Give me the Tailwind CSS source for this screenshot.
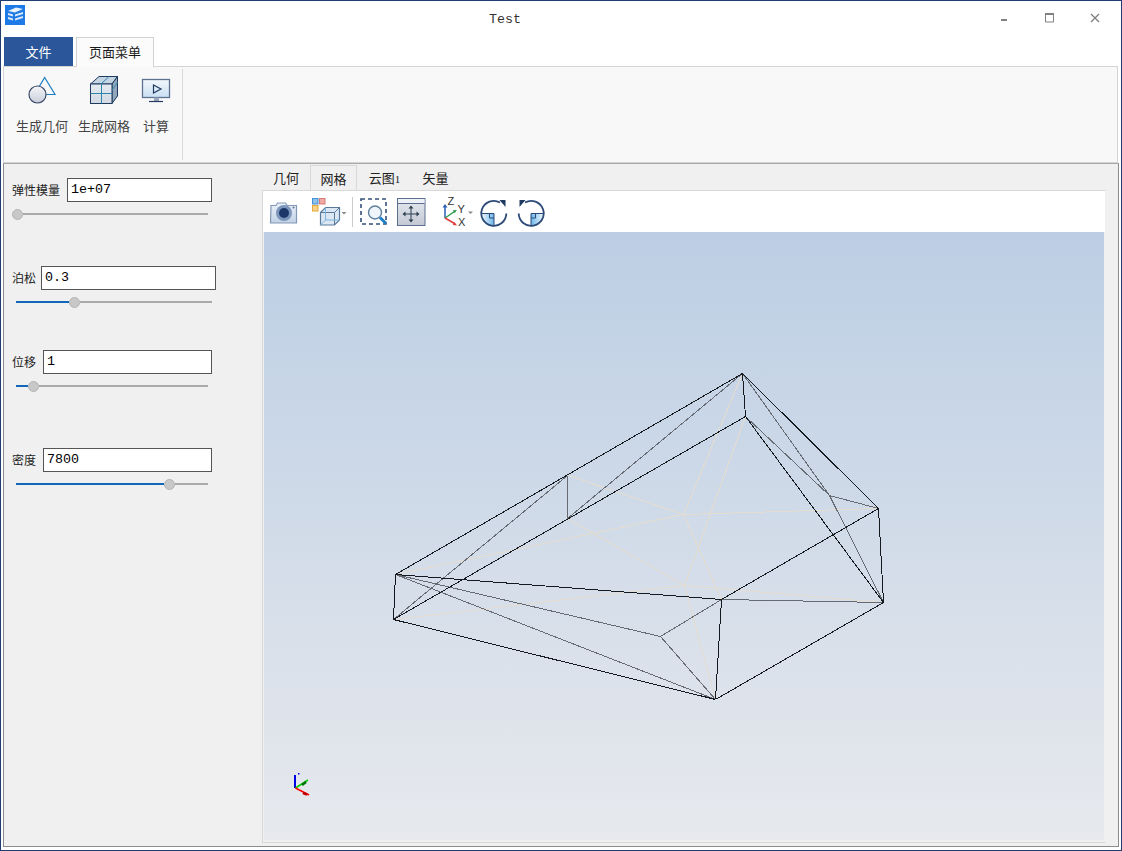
<!DOCTYPE html>
<html>
<head>
<meta charset="utf-8">
<script src="https://cdn.jsdelivr.net/npm/@tailwindcss/browser@4"></script>
</head>
<body class="m-0">
<div class="w-[1122px] h-[851px] border border-[#1f3d73] bg-white flex flex-col overflow-hidden font-['Noto_Sans_CJK_SC','Liberation_Sans',sans-serif] text-[#1a1a1a]">

  <!-- title bar -->
  <div class="h-[36px] flex shrink-0">
    <svg class="ml-[4px] mt-[4px] w-[20px] h-[20px]" viewBox="5 5 20 20">
      <rect x="5" y="5" width="20" height="20" fill="#1e7ae6"/>
      <path d="M8 11l8-3.500 7 1.500-8 3.500z" fill="#fff" opacity=".9"/>
      <path d="M8 13l5 1.500v2l-5-1.500zM8 17l5 1.500v2l-5-1.500zM15 14.500l8-2.500v2l-8 2.500zM15 18.500l8-2.500v2l-8 2.500z" fill="#fff" opacity=".85"/>
    </svg>
    <div class="ml-[464px] mt-[11px] h-[16px] leading-[16px] text-[13.33px] text-[#333] font-['Liberation_Mono',monospace]">Test</div>
    <div class="ml-auto flex">
      <svg class="w-[20px] h-[20px] mt-[8px]" viewBox="993 9 20 20"><rect x="1000" y="19" width="6" height="2" fill="#808080"/></svg>
      <svg class="ml-[26px] w-[20px] h-[20px] mt-[8px]" viewBox="1040 9 20 20"><path d="M1045.500 14.500h8v7.500h-8z" fill="none" stroke="#808080"/><rect x="1045" y="13" width="9" height="2" fill="#808080"/></svg>
      <svg class="ml-[25px] mr-[16px] w-[20px] h-[20px] mt-[8px]" viewBox="1085 9 20 20"><path d="M1091 14l8 8M1099 14l-8 8" stroke="#808080" stroke-width="1.300" fill="none"/></svg>
    </div>
  </div>

  <!-- ribbon tabs -->
  <div class="h-[29px] flex pl-[3px] shrink-0 relative z-10">
    <div class="w-[69px] h-[29px] bg-[#2b579a] text-white text-[13px] leading-[29px] text-center">文件</div>
    <div class="ml-[3px] w-[78px] h-[30px] border border-b-0 border-[#d2d2d2] bg-[#fbfbfb] text-[13px] leading-[28px] text-center">页面菜单</div>
  </div>

  <!-- ribbon -->
  <div class="ml-[2px] w-[1115px] h-[97px] shrink-0 border border-[#d4d4d4] bg-[#f8f8f8] flex text-[13px] text-[#444]">
    <div class="w-[179px] my-[2px] border-r border-[#d8d8d8] flex">
      <div class="w-[62px] ml-[7px] flex flex-col items-center">
        <svg class="mt-[5px] w-[32px] h-[32px]" viewBox="26 74 32 32">
          <defs><linearGradient id="g1" x1="0" y1="0" x2="0" y2="1"><stop offset="0" stop-color="#f4f5f8"/><stop offset="1" stop-color="#c9cfdb"/></linearGradient></defs>
          <path d="M44.700 77.500L55 94.500H34.500z" fill="#f8f8f8" stroke="#1f7fc4" stroke-width="1.200"/>
          <circle cx="37.500" cy="94.500" r="8.500" fill="url(#g1)" stroke="#3b4a6b" stroke-width="1.200"/>
        </svg>
        <div class="mt-[11px] leading-[18px] whitespace-nowrap">生成几何</div>
      </div>
      <div class="w-[62px] flex flex-col items-center">
        <svg class="mt-[5px] w-[32px] h-[32px]" viewBox="88 74 32 32">
          <defs><linearGradient id="g2" x1="0" y1="0" x2="0" y2="1"><stop offset="0" stop-color="#e6ebf1"/><stop offset="1" stop-color="#d2d9e2"/></linearGradient></defs>
          <path d="M90.500 84l8.500-7.500h18.500l-5.500 7.500z" fill="#c5d4e2" stroke="#1f3a5f"/>
          <path d="M112 84l5.500-7.500v19.500l-5.500 7.500z" fill="#8fa6bd" stroke="#1f3a5f"/>
          <rect x="90.500" y="84" width="21.500" height="19.500" fill="url(#g2)" stroke="#1f3a5f"/>
          <path d="M101.500 84v19.500M90.500 93.500h21.500M101 84l8-7.500M112 90l5.500-7.500" stroke="#2f86ab" fill="none"/>
        </svg>
        <div class="mt-[11px] leading-[18px] whitespace-nowrap">生成网格</div>
      </div>
      <div class="w-[42px] flex flex-col items-center">
        <svg class="mt-[5px] w-[32px] h-[32px]" viewBox="140 74 32 32">
          <defs><linearGradient id="g3" x1="0" y1="0" x2="0" y2="1"><stop offset="0" stop-color="#f2f7fc"/><stop offset="1" stop-color="#c9dff3"/></linearGradient></defs>
          <rect x="142.500" y="79.500" width="27" height="18" fill="url(#g3)" stroke="#5f7193" stroke-width="1.300"/>
          <path d="M153.500 85l7.500 4-7.500 4z" fill="none" stroke="#1f3a5f" stroke-width="1.200"/>
          <path d="M154 97.500h5v4h-5z" fill="#9aa7bd"/>
          <path d="M149 101.500h14" stroke="#1f3a5f" stroke-width="1.200"/>
        </svg>
        <div class="mt-[11px] leading-[18px] whitespace-nowrap">计算</div>
      </div>
    </div>
  </div>

  <!-- main panel -->
  <div class="ml-[2px] w-[1116px] flex-1 mb-[3px] bg-[#f0f0f0] border border-[#8c8c8c] border-t-[#a8a8a8] flex">
    <!-- sidebar -->
    <div class="w-[258px] shrink-0 pt-[14px] text-[12px] text-[#222]">
      <div class="h-[42px]">
        <div class="flex items-center pl-[8px] h-[24px]">
          <span class="w-[48px] whitespace-nowrap">弹性模量</span>
          <div class="ml-[7px] w-[145px] h-[24px] border border-[#555] bg-white pl-[3px] leading-[22px] text-[13.33px] text-black font-['Liberation_Mono',monospace]">1e+07</div>
        </div>
        <div class="mt-[6px] ml-[8px] w-[196px] h-[12px] flex items-center">
          <div class="w-[11px] h-[11px] rounded-full bg-[#c8c8c8] border border-[#b4b4b4] shrink-0"></div>
          <div class="flex-1 h-[2px] bg-[#aaaaaa]"></div>
        </div>
      </div>
      <div class="h-[42px] mt-[46px]">
        <div class="flex items-center pl-[8px] h-[24px]">
          <span class="w-[23px] whitespace-nowrap">泊松</span>
          <div class="ml-[6px] w-[175px] h-[24px] border border-[#555] bg-white pl-[3px] leading-[22px] text-[13.33px] text-black font-['Liberation_Mono',monospace]">0.3</div>
        </div>
        <div class="mt-[6px] ml-[12px] w-[196px] h-[12px] flex items-center">
          <div class="w-[53px] h-[2px] bg-[#1167b8]"></div>
          <div class="w-[11px] h-[11px] rounded-full bg-[#c8c8c8] border border-[#b4b4b4] shrink-0"></div>
          <div class="flex-1 h-[2px] bg-[#aaaaaa]"></div>
        </div>
      </div>
      <div class="h-[42px] mt-[42px]">
        <div class="flex items-center pl-[8px] h-[24px]">
          <span class="w-[25px] whitespace-nowrap">位移</span>
          <div class="ml-[6px] w-[169px] h-[24px] border border-[#555] bg-white pl-[3px] leading-[22px] text-[13.33px] text-black font-['Liberation_Mono',monospace]">1</div>
        </div>
        <div class="mt-[6px] ml-[12px] w-[192px] h-[12px] flex items-center">
          <div class="w-[12px] h-[2px] bg-[#1167b8]"></div>
          <div class="w-[11px] h-[11px] rounded-full bg-[#c8c8c8] border border-[#b4b4b4] shrink-0"></div>
          <div class="flex-1 h-[2px] bg-[#aaaaaa]"></div>
        </div>
      </div>
      <div class="h-[42px] mt-[56px]">
        <div class="flex items-center pl-[8px] h-[24px]">
          <span class="w-[25px] whitespace-nowrap">密度</span>
          <div class="ml-[6px] w-[169px] h-[24px] border border-[#555] bg-white pl-[3px] leading-[22px] text-[13.33px] text-black font-['Liberation_Mono',monospace]">7800</div>
        </div>
        <div class="mt-[6px] ml-[12px] w-[192px] h-[12px] flex items-center">
          <div class="w-[148px] h-[2px] bg-[#1167b8]"></div>
          <div class="w-[11px] h-[11px] rounded-full bg-[#c8c8c8] border border-[#b4b4b4] shrink-0"></div>
          <div class="flex-1 h-[2px] bg-[#aaaaaa]"></div>
        </div>
      </div>
    </div>

    <!-- right column -->
    <div class="w-[844px] shrink-0 flex flex-col pt-[1px] mb-[3px]">
      <div class="h-[25px] flex text-[13px] text-[#222] shrink-0 relative z-10">
        <div class="w-[48px] text-center leading-[26px]">几何</div>
        <div class="w-[47px] h-[25px] border border-b-0 border-[#d8d8d8] bg-[#f0f0f0] text-center leading-[26px]">网格</div>
        <div class="w-[54px] text-center leading-[26px] whitespace-nowrap">云图<span class="text-[11px] tracking-[-1px] font-['Liberation_Serif',serif]">1</span></div>
        <div class="w-[49px] text-center leading-[26px]">矢量</div>
      </div>
      <div class="flex-1 border border-[#d8d8d8] border-r-transparent flex flex-col">
        <!-- toolbar -->
        <div class="h-[41px] bg-white shrink-0 flex">
          <svg class="w-[842px] h-[41px]" viewBox="263 191 842 41">
            <defs>
              <linearGradient id="c1" x1="0" y1="0" x2="0" y2="1"><stop offset="0" stop-color="#eaf1f8"/><stop offset="1" stop-color="#c2d3e6"/></linearGradient>
              <linearGradient id="c2" x1="0" y1="0" x2="0" y2="1"><stop offset="0" stop-color="#e6e9ef"/><stop offset="1" stop-color="#c3c9d5"/></linearGradient>
              <linearGradient id="c3" x1="0" y1="0" x2="1" y2="0"><stop offset="0" stop-color="#f2f8fd"/><stop offset="1" stop-color="#6bb6ea"/></linearGradient>
              <linearGradient id="c4" x1="1" y1="0" x2="0" y2="0"><stop offset="0" stop-color="#f2f8fd"/><stop offset="1" stop-color="#6bb6ea"/></linearGradient>
            </defs>
            <!-- camera -->
            <path d="M271 205.500h5l1.500-2.500h8l1.500 2.500h9.500v17.500h-26z" fill="url(#c1)" stroke="#8497b6" stroke-width="1.200"/>
            <circle cx="284" cy="213" r="8" fill="#7c95ba"/>
            <circle cx="284" cy="213" r="5" fill="#1d3768"/>
            <circle cx="293.500" cy="207.500" r="1" fill="#5f7193"/>
            <!-- palette + cube -->
            <rect x="312.500" y="198.500" width="5.500" height="5.500" fill="#8ec0ea" stroke="#3f8fd6"/>
            <rect x="319.500" y="198.500" width="5.500" height="5.500" fill="#efa9a4" stroke="#d87a75"/>
            <rect x="312.500" y="205.500" width="5.500" height="5.500" fill="#f7d28a" stroke="#e9a63a"/>
            <path d="M320.500 212.500l5-5h14v12.500l-5 5h-14z" fill="#dbe7f3" stroke="#5a7a9b" stroke-width="1.200"/>
            <path d="M320.500 212.500h14v12.500M334.500 212.500l5-5" fill="none" stroke="#5a7a9b"/>
            <path d="M320.500 225l5-5h14M325.500 207.500V220" fill="none" stroke="#7fb4de"/>
            <path d="M341.500 212h5l-2.500 2.500z" fill="#888"/>
            <path d="M352.500 197v30" stroke="#cccccc"/>
            <!-- zoom box -->
            <rect x="361" y="199" width="25" height="25" fill="none" stroke="#34507a" stroke-width="1.600" stroke-dasharray="4 3"/>
            <circle cx="375" cy="212.500" r="6.500" fill="#eef5fb" stroke="#5f7f9f" stroke-width="1.400"/>
            <path d="M380 217.500l6 6" stroke="#1f7fc4" stroke-width="3"/>
            <!-- fit -->
            <rect x="397.500" y="198.500" width="27.500" height="27" fill="url(#c2)" stroke="#5b6f8e"/>
            <rect x="398" y="199" width="26.500" height="4" fill="#eef1f5"/>
            <path d="M398 203.500h26.500" stroke="#5b6f8e"/>
            <path d="M411 207.500v13M404.500 214h13" stroke="#2c3e50" stroke-width="1"/>
            <path d="M411 205.500l-2.500 3h5zM411 222.500l-2.500-3h5zM402.500 214l3-2.500v5zM419.500 214l-3-2.500v5z" fill="#2c3e50"/>
            <!-- axes -->
            <path d="M445 218V206" stroke="#2a5fb5" stroke-width="1.500"/>
            <path d="M445 204l-2.500 3.500h5z" fill="#2a5fb5"/>
            <path d="M445 218l9.500-6.500" stroke="#28a04a" stroke-width="1.500"/>
            <path d="M457 210l-4.200.2 1.800 3z" fill="#28a04a"/>
            <path d="M445 218l9.500 5.500" stroke="#e23b3b" stroke-width="1.500"/>
            <path d="M457 225.500l-4.200-.5 1.800-3z" fill="#e23b3b"/>
            <text x="447.500" y="205" font-family="Liberation Sans" font-size="11" fill="#333">Z</text>
            <text x="457.500" y="213" font-family="Liberation Sans" font-size="11" fill="#333">Y</text>
            <text x="458" y="225.500" font-family="Liberation Sans" font-size="11" fill="#333">X</text>
            <path d="M468 211.500h5l-2.500 2.500z" fill="#888"/>
            <!-- rotate right -->
            <path d="M481.500 213.500h12.500v12.500a12.500 12.500 0 0 1-12.500-12.500z" fill="url(#c3)"/>
            <path d="M481.500 213.500h12.500v12.500M489.500 213.500v4.500h4.500" fill="none" stroke="#2c4a78"/>
            <path d="M500 202.500a12.500 12.500 0 1 0 6.300 11" fill="none" stroke="#2c4a78" stroke-width="1.800"/>
            <path d="M499.500 200h6v7z" fill="#1f3a5f"/>
            <!-- rotate left -->
            <path d="M543.500 213.500h-12.500v12.500a12.500 12.500 0 0 0 12.500-12.500z" fill="url(#c4)"/>
            <path d="M543.500 213.500h-12.500v12.500M535.500 213.500v4.500h-4.500" fill="none" stroke="#2c4a78"/>
            <path d="M525 202.500a12.500 12.500 0 1 1-6.300 11" fill="none" stroke="#2c4a78" stroke-width="1.800"/>
            <path d="M525.500 200h-6v7z" fill="#1f3a5f"/>
          </svg>
        </div>
        <!-- viewport -->
        <div class="ml-[1px] w-[840px] h-[608px] shrink-0 bg-linear-to-b from-[#bccee4] to-[#e7e9ed]">
          <svg class="block w-[840px] h-[608px]" viewBox="264 232 840 608" fill="none" shape-rendering="crispEdges">
            <g transform="translate(0.5 0.5)">
              <g stroke="#e3dccf" stroke-width="1">
                <path d="M742 373L683 514M745 416L684 585M568 475L683 514M683 514L721 599M395 574L683 514M683 514L878 508M393 619L684 585M684 585L883 602M567 518L684 585M684 585L715 699"/>
              </g>
              <g stroke="#666b73" stroke-width="1">
                <path d="M742 373L567 518M567 475L393 619M567 475V518M742 373L829 495M829 495L883 602M745 416L829 495M829 495L878 508M721 599L883 602M395 574L660 636M395 574L715 699M660 636L721 599M660 636L715 699"/>
              </g>
              <g stroke="#14181f" stroke-width="1">
                <path d="M742 373L395 574M742 373L745 416M745 416L393 619M742 373L878 508M745 416L883 602M878 508L883 602M878 508L721 599M395 574L721 599M395 574L393 619M393 619L715 699M721 599L715 699M715 699L883 602"/>
              </g>
            </g>
            <g shape-rendering="auto">
              <path d="M295 788V775" stroke="#0000e0" stroke-width="2"/>
              <rect x="298" y="773" width="1.500" height="1.500" fill="#0000e0"/>
              <path d="M295.500 788L308 780" stroke="#00d000" stroke-width="1.500"/>
              <path d="M302 785l4-3" stroke="#007000" stroke-width="2.500"/>
              <path d="M295.500 788L309 795" stroke="#ff0000" stroke-width="1.500"/>
              <path d="M303 793l4 1.500" stroke="#c00000" stroke-width="2.500"/>
            </g>
          </svg>
        </div>
      </div>
    </div>
  </div>
</div>
</body>
</html>
